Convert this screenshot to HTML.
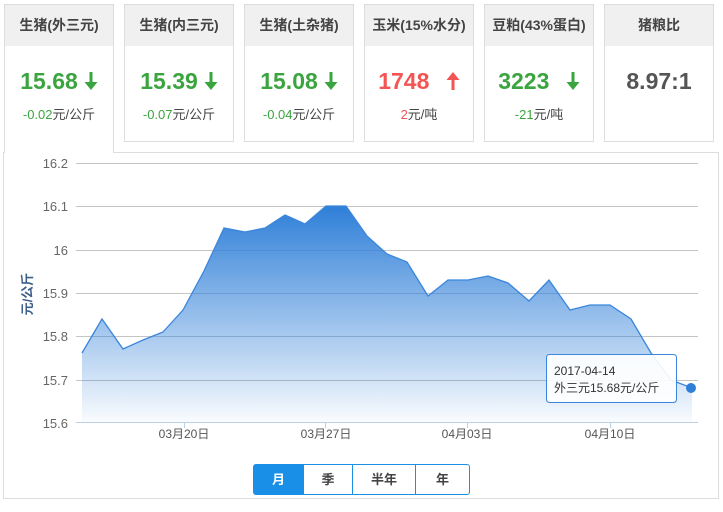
<!DOCTYPE html>
<html><head><meta charset="utf-8"><style>
body{margin:0;width:723px;height:512px;background:#fff;font-family:"Liberation Sans","Noto Sans CJK SC",sans-serif;position:relative;overflow:hidden}
.card{position:absolute;top:4px;width:108px;height:136px;border:1px solid #ddd;background:#fff;text-align:center}
.card .h{height:41px;background:#f0f0f0;line-height:41px;font-size:14px;font-weight:bold;color:#444}
.card .v{margin-top:22px;font-size:23px;font-weight:bold;line-height:26px}
.card .s{margin-top:10px;font-size:13px;color:#444}
.g{color:#3aa53f}.r{color:#f45454}
.arr{display:inline-block;margin-left:6px;vertical-align:-1px}
.panel{position:absolute;left:3px;top:152px;width:714px;height:345px;border:1px solid #ddd;border-top:1px solid #ddd}
.btns{position:absolute;left:253px;top:464px;height:29px;border:1px solid #1a8fe8;border-radius:3px;display:flex;font-size:13px;font-weight:bold;color:#444}
.btns div{line-height:29px;text-align:center;border-left:1px solid #1a8fe8}
</style></head><body>
<div class="panel"></div>
<div class="card" style="left:4px;height:148px;border-bottom:none;z-index:2"><div class="h">生猪(外三元)</div><div class="v g">15.68<svg class="arr" width="14" height="18" viewBox="0 0 14 18"><path d="M5.5 0h3v10h5L7 18 0.5 10h5z" fill="#3aa53f"/></svg></div><div class="s"><span class="g">-0.02</span>元/公斤</div></div>
<div class="card" style="left:124px"><div class="h">生猪(内三元)</div><div class="v g">15.39<svg class="arr" width="14" height="18" viewBox="0 0 14 18"><path d="M5.5 0h3v10h5L7 18 0.5 10h5z" fill="#3aa53f"/></svg></div><div class="s"><span class="g">-0.07</span>元/公斤</div></div>
<div class="card" style="left:244px"><div class="h">生猪(土杂猪)</div><div class="v g">15.08<svg class="arr" width="14" height="18" viewBox="0 0 14 18"><path d="M5.5 0h3v10h5L7 18 0.5 10h5z" fill="#3aa53f"/></svg></div><div class="s"><span class="g">-0.04</span>元/公斤</div></div>
<div class="card" style="left:364px"><div class="h">玉米(15%水分)</div><div class="v r">1748 <svg class="arr" style="margin-left:10px" width="14" height="18" viewBox="0 0 14 18"><path d="M5.5 18h3V8h5L7 0 0.5 8h5z" fill="#f45454"/></svg></div><div class="s"><span class="r">2</span>元/吨</div></div>
<div class="card" style="left:484px"><div class="h">豆粕(43%蛋白)</div><div class="v g">3223 <svg class="arr" style="margin-left:10px" width="14" height="18" viewBox="0 0 14 18"><path d="M5.5 0h3v10h5L7 18 0.5 10h5z" fill="#3aa53f"/></svg></div><div class="s"><span class="g">-21</span>元/吨</div></div>
<div class="card" style="left:604px"><div class="h">猪粮比</div><div class="v" style="color:#555">8.97:1</div></div>
<svg style="position:absolute;left:0;top:0" width="723" height="512">
<defs><linearGradient id="gr" x1="0" y1="0" x2="0" y2="1"><stop offset="0" stop-color="#2f7fd8"/><stop offset="1" stop-color="#2f7fd8" stop-opacity="0.03"/></linearGradient></defs>
<g stroke="#c4c4c4" stroke-width="1">
<line x1="76" y1="163.5" x2="698" y2="163.5"/><line x1="76" y1="206.5" x2="698" y2="206.5"/><line x1="76" y1="250.5" x2="698" y2="250.5"/><line x1="76" y1="293.5" x2="698" y2="293.5"/><line x1="76" y1="336.5" x2="698" y2="336.5"/><line x1="76" y1="380.5" x2="698" y2="380.5"/></g>
<path d="M82,422 L82,353 L102,319 L123,349 L143,340 L163,332 L183,310 L204,271 L224,228 L245,232 L265,228 L285,215 L305,224 L326,206 L346,206 L367,236 L387,254 L407,262 L428,296 L448,280 L468,280 L488,276 L508,283 L529,301 L549,280 L570,310 L590,305 L610,305 L631,319 L651,353 L671,380 L692,388 L692,422 Z" fill="url(#gr)"/>
<path d="M82,353 L102,319 L123,349 L143,340 L163,332 L183,310 L204,271 L224,228 L245,232 L265,228 L285,215 L305,224 L326,206 L346,206 L367,236 L387,254 L407,262 L428,296 L448,280 L468,280 L488,276 L508,283 L529,301 L549,280 L570,310 L590,305 L610,305 L631,319 L651,353 L671,380 L692,388" fill="none" stroke="#3a86dc" stroke-width="1.3"/>
<line x1="76" y1="422.5" x2="698" y2="422.5" stroke="#bcd0e4"/>
<g stroke="#bcd0e4"><line x1="184.5" y1="422" x2="184.5" y2="428"/><line x1="325.5" y1="422" x2="325.5" y2="428"/><line x1="467.5" y1="422" x2="467.5" y2="428"/><line x1="610.5" y1="422" x2="610.5" y2="428"/></g>
<g font-size="13" fill="#666" text-anchor="end" font-family="Liberation Sans,sans-serif"><text x="68" y="168">16.2</text><text x="68" y="211">16.1</text><text x="68" y="255">16</text><text x="68" y="298">15.9</text><text x="68" y="341">15.8</text><text x="68" y="385">15.7</text><text x="68" y="428">15.6</text></g>
<g font-size="12" fill="#555" text-anchor="middle"><text x="184" y="438">03月20日</text><text x="326" y="438">03月27日</text><text x="467" y="438">04月03日</text><text x="610" y="438">04月10日</text></g>
<text x="32" y="294" font-size="13" fill="#3d5f8a" font-weight="bold" transform="rotate(-90 32 294)" text-anchor="middle">元/公斤</text>
<rect x="546.5" y="354.5" width="130" height="48" rx="3" fill="#fff" fill-opacity="0.9" stroke="#3a86dc"/>
<text x="554" y="375" font-size="12" fill="#333">2017-04-14</text>
<text x="554" y="392" font-size="12" fill="#333">外三元15.68元/公斤</text>
<circle cx="691" cy="388" r="5" fill="#2f7fd8"/>
</svg>
<div class="btns"><div style="width:49px;border-left:none;background:#1a8fe8;color:#fff">月</div><div style="width:48px">季</div><div style="width:62px">半年</div><div style="width:53px">年</div></div>
</body></html>
